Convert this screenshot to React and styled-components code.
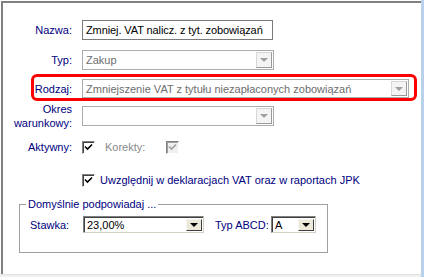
import React from 'react';
import styled, { createGlobalStyle } from 'styled-components';

const Global = createGlobalStyle`
  html, body { margin: 0; padding: 0; background: #fff; }
  body { font-family: "Liberation Sans", Arial, sans-serif; font-size: 11px; }
  * { box-sizing: border-box; }
`;

const Window = styled.div`
  width: 424px;
  height: 277px;
  display: flex;
  background: #fff;
`;

const Main = styled.div`
  flex: 1;
  display: flex;
  flex-direction: column;
`;

const RightStrip = styled.div`
  width: 3px;
  background: #b9d1ea;
`;

const BottomStrip = styled.div`
  height: 3px;
  background: #f0f0f0;
  border-top: 1px solid #e3e3e3;
`;

const Panel = styled.div`
  flex: 1;
  margin: 1px 0 0 1px;
  border-top: 2px solid #808080;
  border-left: 2px solid #808080;
  padding: 17px 0 0 0;
  display: flex;
  flex-direction: column;
`;

const Row = styled.div`
  position: relative;
  display: flex;
  align-items: center;
  height: ${p => p.$h || 20}px;
  margin-bottom: ${p => p.$mb || 0}px;
`;

const Label = styled.div`
  width: 69px;
  margin-right: 10px;
  text-align: right;
  color: #000080;
  line-height: 14px;
`;

const Highlight = styled.div`
  position: absolute;
  left: 28px;
  top: -5px;
  width: 386px;
  height: 27px;
  border: 3px solid #ff0000;
  border-radius: 6px;
  pointer-events: none;
`;

const TextBox = styled.div`
  width: ${p => p.$w}px;
  height: 100%;
  border: 1px solid #7a7a7a;
  padding: 0 3px;
  display: flex;
  align-items: center;
  color: #000;
  font-size: 11px;
  letter-spacing: -0.1px;
  white-space: nowrap;
  overflow: hidden;
`;

const Combo = styled.div`
  width: ${p => p.$w}px;
  height: ${p => p.$h || 20}px;
  display: flex;
  align-items: stretch;
  padding: 1px;
  background: #fff;
  border: 1px solid ${p => (p.$disabled ? '#acacac' : '#808080')};
  ${p => !p.$disabled && `
    border-top-color: #808080;
    border-left-color: #808080;
    border-right-color: #d4d0c8;
    border-bottom-color: #d4d0c8;
    box-shadow: inset 1px 1px 0 #404040;
    padding: 2px 1px 1px 2px;
  `}
`;

const ComboText = styled.div`
  flex: 1;
  display: flex;
  align-items: center;
  padding-left: ${p => (p.$disabled ? 2 : 1)}px;
  color: ${p => (p.$disabled ? '#6d6d6d' : '#000')};
  font-size: 11px;
  white-space: nowrap;
  overflow: hidden;
`;

const DropButton = styled.div`
  width: 16px;
  display: flex;
  align-items: center;
  justify-content: center;
  background: ${p => (p.$disabled ? '#f4f4f4' : '#ece9d8')};
  border: 1px solid;
  border-color: ${p => (p.$disabled
    ? '#d8d8d8 #9a9a9a #9a9a9a #d8d8d8'
    : '#f4f4f4 #404040 #404040 #f4f4f4')};
`;

const Arrow = styled.div`
  width: 0;
  height: 0;
  border-left: 4px solid transparent;
  border-right: 4px solid transparent;
  border-top: 4px solid ${p => (p.$disabled ? '#a0a0a0' : '#000')};
`;

const ComboBox = ({ w, h, disabled, children }) => (
  <Combo $w={w} $h={h} $disabled={disabled}>
    <ComboText $disabled={disabled}>{children}</ComboText>
    <DropButton $disabled={disabled}><Arrow $disabled={disabled} /></DropButton>
  </Combo>
);

const CheckBox = styled.div`
  width: 13px;
  height: 13px;
  border: 1px solid;
  border-color: #808080 #fff #fff #808080;
  box-shadow: inset 1px 1px 0 ${p => (p.$disabled ? '#a0a0a0' : '#404040')};
  background: ${p => (p.$disabled ? '#f0f0f0' : '#fff')};
  display: flex;
  align-items: center;
  justify-content: center;
  flex: none;
`;

const Check = ({ disabled }) => (
  <CheckBox $disabled={disabled}>
    <svg width="9" height="9" viewBox="0 0 9 9">
      <path d="M1 3.5 L3.5 6 L8 1.5" stroke={disabled ? '#a0a0a0' : '#000'} strokeWidth="1.6" fill="none" />
    </svg>
  </CheckBox>
);

const CheckRow = styled.div`
  display: flex;
  align-items: center;
  height: ${p => p.$h || 16}px;
  margin-bottom: ${p => p.$mb || 0}px;
  padding-left: ${p => p.$pl || 0}px;
`;

const CheckText = styled.span`
  color: ${p => (p.$disabled ? '#8a8a8a' : '#000080')};
  margin-left: ${p => p.$ml || 4}px;
  margin-right: ${p => p.$mr || 0}px;
`;

const Group = styled.fieldset`
  margin: 0 0 0 16px;
  width: 309px;
  height: 55px;
  border: 1px solid #a0a0a0;
  padding: 6px 0 0 10px;
`;

const Legend = styled.legend`
  color: #000080;
  padding: 0 2px;
  margin-left: -4px;
  font-size: 11px;
`;

const GroupRow = styled.div`
  display: flex;
  align-items: center;
  height: 17px;
`;

const GroupLabel = styled.span`
  color: #000080;
  width: ${p => p.$w}px;
  margin-left: ${p => p.$ml || 0}px;
  flex: none;
`;

export default function App() {
  return (
    <>
      <Global />
      <Window>
        <Main>
          <Panel>
            <Row $mb={10}>
              <Label>Nazwa:</Label>
              <TextBox $w={191}>Zmniej. VAT nalicz. z tyt. zobowiązań</TextBox>
            </Row>
            <Row $mb={9}>
              <Label>Typ:</Label>
              <ComboBox w={192} disabled>Zakup</ComboBox>
            </Row>
            <Row $mb={8} $h={19}>
              <Highlight />
              <Label>Rodzaj:</Label>
              <ComboBox w={327} h={19} disabled>Zmniejszenie VAT z tytułu niezapłaconych zobowiązań</ComboBox>
            </Row>
            <Row $mb={13}>
              <Label>Okres warunkowy:</Label>
              <ComboBox w={192} disabled></ComboBox>
            </Row>
            <CheckRow $mb={17}>
              <Label>Aktywny:</Label>
              <Check />
              <CheckText $disabled $ml={10} $mr={21}>Korekty:</CheckText>
              <Check disabled />
            </CheckRow>
            <CheckRow $mb={10} $pl={79}>
              <Check />
              <CheckText $ml={5}>Uwzględnij w deklaracjach VAT oraz w raportach JPK</CheckText>
            </CheckRow>
            <Group>
              <Legend>Domyślnie podpowiadaj ...</Legend>
              <GroupRow>
                <GroupLabel $w={53}>Stawka:</GroupLabel>
                <ComboBox w={121} h={17}>23,00%</ComboBox>
                <GroupLabel $w={56} $ml={11}>Typ ABCD:</GroupLabel>
                <ComboBox w={45} h={17}>A</ComboBox>
              </GroupRow>
            </Group>
          </Panel>
          <BottomStrip />
        </Main>
        <RightStrip />
      </Window>
    </>
  );
}
